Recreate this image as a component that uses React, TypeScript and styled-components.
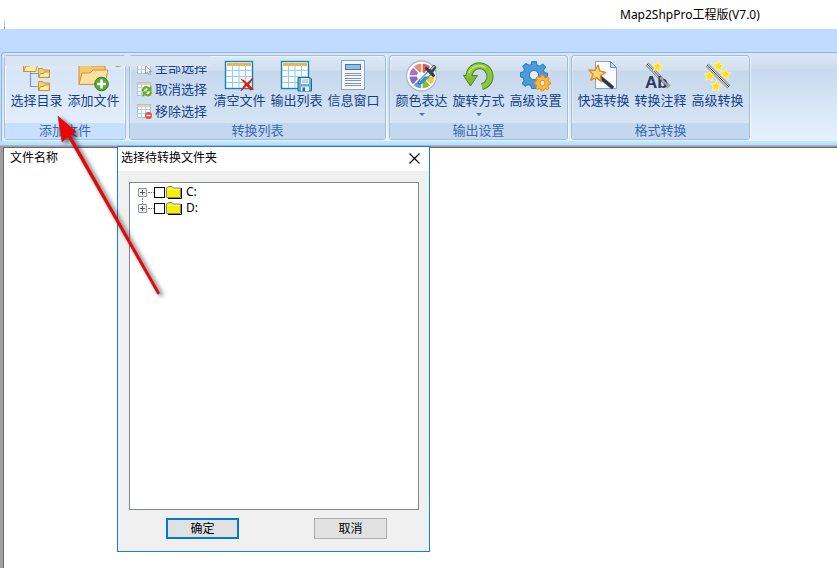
import React from "react";
import styled, { createGlobalStyle, css } from "styled-components";

const GlobalStyle = createGlobalStyle`
  * { box-sizing: border-box; }
  html, body, #root { height: 100%; }
  body {
    margin: 0;
    background: #fff;
    color: #000;
    font: 12px/16px "Noto Sans", "Noto Sans CJK SC", sans-serif;
    overflow: hidden;
  }
  button { font: inherit; color: inherit; }
`;

const Window = styled.div`
  position: relative;
  display: flex;
  flex-direction: column;
  min-height: 100%;
`;

const TitleBar = styled.header`
  display: flex;
  align-items: flex-end;
  height: 29px;
  padding-left: 4px;
  white-space: nowrap;
`;

const EdgeMark = styled.span`
  width: 1px;
  height: 11px;
  background: linear-gradient(#fff, #7f93ad);
`;

const Caption = styled.h1`
  margin: 0 0 0 615px;
  font-size: 12px;
  font-weight: 400;
  line-height: 28px;
`;

const TabStrip = styled.div`
  height: 23px;
  background: #bfdbff;
`;

const RibbonBack = styled.div`
  padding-left: 1px;
  padding-bottom: 2px;
  background: #bfdbff;
  border-bottom: 1px solid #9fb8da;
`;

const Ribbon = styled.nav`
  position: relative;
  display: flex;
  gap: 3px;
  height: 91px;
  padding: 2px 0 3px 2px;
  border: 1px solid #8db2e3;
  border-right: 0;
  border-bottom: 2px solid #bdeaf8;
  border-radius: 4px 0 0 4px;
  background: linear-gradient(#dbe6f4 0, #cfdded 15px, #c9d9ed 16px, #e7f2ff 100%);
`;

const Group = styled.section<{ $hot?: boolean }>`
  display: flex;
  flex-direction: column;
  flex: none;
  height: 85px;
  border: 1px solid #9ebfdb;
  border-radius: 3px;
  box-shadow: inset 1px 1px 0 #ffffff55, 1px 0 0 #ffffff99;
  background: linear-gradient(#dde8f5 0, #d1dfef 14px, #c7d8ed 15px, #d9e8f5 100%);
  ${(p) =>
    p.$hot &&
    css`
      border-color: #9fc3e8;
      background: linear-gradient(#e4effc 0, #dce8f8 14px, #d6e5f8 15px, #e6f0fd 100%);
      box-shadow: inset -1px -1px 0 #fff, inset 1px 0 0 #fff;
    `}
`;

const GroupTools = styled.div`
  display: flex;
  flex: 1;
  padding: 0 3px;
`;

const GroupName = styled.h2<{ $hot?: boolean }>`
  height: 16px;
  margin: 0;
  border-radius: 0 0 2px 2px;
  background: ${(p) => (p.$hot ? "#c8e0ff" : "#c1d8f0")};
  color: #3e6aaa;
  font-size: 13px;
  font-weight: 400;
  line-height: 15px;
  text-align: center;
`;

const BigButton = styled.button`
  display: flex;
  flex-direction: column;
  align-items: center;
  width: 57px;
  padding: 4px 0 0;
  border: 0;
  background: none;
  color: #15428b;
  font-size: 13px;
  line-height: 16px;
  white-space: nowrap;
  svg { flex: none; overflow: visible; }
`;

const DropMark = styled.span`
  margin-top: 5px;
  border: 3px solid transparent;
  border-top-color: #5077ac;
  border-bottom: 0;
`;

const SmallList = styled.div`
  display: flex;
  flex-direction: column;
  width: 78px;
  padding-left: 4px;
`;

const SmallButton = styled.button`
  display: flex;
  align-items: center;
  gap: 3px;
  height: 22px;
  padding: 0;
  border: 0;
  background: none;
  color: #15428b;
  font-size: 13px;
  line-height: 20px;
  white-space: nowrap;
`;

const Veil = styled.div`
  position: absolute;
  top: 3px;
  left: 3px;
  width: 206px;
  height: 10px;
  background: #dae5f2;
`;

const FilePane = styled.main`
  flex: 1;
  border-top: 1px solid #a0a0a0;
  border-left: 3px solid #a0a0a0;
  background: #fff;
  box-shadow: inset 1px 1px 0 #696969;
`;

const FileTable = styled.table`
  width: 100%;
  border-collapse: collapse;
  th {
    padding: 3px 7px;
    font-weight: 400;
    text-align: left;
  }
`;

const Dialog = styled.section`
  position: absolute;
  top: 146px;
  left: 117px;
  width: 313px;
  border: 1px solid #1a7fd4;
  background: #f0f0f0;
`;

const DialogTitle = styled.div`
  display: flex;
  align-items: flex-start;
  justify-content: space-between;
  height: 24px;
  padding-left: 3px;
  background: #fff;
  h2 { margin: 0; font-size: 12px; font-weight: 400; line-height: 22px; }
`;

const CloseButton = styled.button`
  display: flex;
  align-items: center;
  justify-content: center;
  width: 30px;
  height: 22px;
  padding: 0;
  border: 0;
  background: none;
`;

const Tree = styled.ul`
  height: 328px;
  margin: 11px 10px 0 11px;
  padding: 1px 8px;
  border: 1px solid #828790;
  background: #fff;
  list-style: none;
`;

const TreeRow = styled.li`
  display: flex;
  align-items: center;
  height: 16px;
`;

const Expander = styled.button`
  position: relative;
  display: flex;
  width: 9px;
  height: 9px;
  padding: 0;
  border: 1px solid #919191;
  border-radius: 1px;
  background: #f5f5f5;
  svg { display: block; }
`;

const Dots = styled.span`
  width: 6px;
  margin-left: 1px;
  border-top: 1px dotted #808080;
`;

const Joint = styled.span`
  position: absolute;
  top: 9px;
  left: 3px;
  height: 6px;
  border-left: 1px dotted #808080;
`;

const DriveLabel = styled.label`
  display: flex;
  align-items: center;
  svg { margin: 0 4px 0 1px; }
`;

const Check = styled.input`
  appearance: none;
  width: 11px;
  height: 11px;
  margin: 0;
  border: 1px solid #000;
  background: #fff;
`;

const DialogActions = styled.div`
  display: flex;
  justify-content: space-between;
  padding: 8px 42px 12px 48px;
`;

const DialogButton = styled.button<{ $primary?: boolean }>`
  width: 73px;
  height: 21px;
  padding: 0;
  border: ${(p) => (p.$primary ? "2px solid #0078d7" : "1px solid #adadad")};
  background: #e1e1e1;
  line-height: 16px;
`;

const Pointer = styled.svg`
  position: absolute;
  top: 110px;
  left: 50px;
  pointer-events: none;
`;

const Icon = ({ children, size = 32, box = 32 }: { children: React.ReactNode; size?: number; box?: number }) => (
  <svg width={size} height={size} viewBox={`0 0 ${box} ${box}`} aria-hidden="true">
    {children}
  </svg>
);

const MiniFolder = ({ x, y }: { x: number; y: number }) => (
  <g transform={`translate(${x} ${y})`} stroke="#c8922e" strokeLinejoin="round">
    <path d="M.5 9.500V.5h4l1 1.500h6v7.500z" fill="#f3cf7b" />
    <path d="M.7 9.500 2.500 5.500h3l1-1.500h5l-.5 5.500z" fill="#ffe9ad" />
  </g>
);

const FolderTreeIcon = () => (
  <Icon>
    <path d="M9.500 10v16.500h8M9.500 13.500h8" fill="none" stroke="#8b98a8" strokeWidth="1.200" />
    <g transform="translate(2 1)" stroke="#c8922e" strokeLinejoin="round">
      <path d="M.5 10.500V1.500h5l1 1.500h6v7.500z" fill="#f3cf7b" />
      <path d="M.5 10.500 3 5h4l1-1h6.500l-2 6.500z" fill="#ffe9ad" />
    </g>
    <MiniFolder x={17} y={8} />
    <MiniFolder x={17} y={21} />
  </Icon>
);

const AddFolderIcon = () => (
  <Icon>
    <ellipse cx="40" cy="4" rx="4" ry="3" fill="#7ab648" />
    <g stroke="#cf9436" strokeLinejoin="round">
      <path d="M1 24.500V3h10l2 3h14v18z" fill="#f2c96c" />
      <path d="M1 24.500 4 13h8l3-3h15l-3 14z" fill="#ffe0a0" />
    </g>
    <circle cx="23.500" cy="24" r="6.800" fill="#55a92e" stroke="#2f7d1c" />
    <path d="M23.500 19.500v9M19 24h9" stroke="#fff" strokeWidth="2.600" />
  </Icon>
);

const Sheet = ({ x = 1 }: { x?: number }) => (
  <g transform={`translate(${x} 1)`}>
    <rect x=".5" y=".5" width="27" height="27" fill="#f7fcff" stroke="#1683b7" strokeWidth="1.400" />
    <path d="M2 3.500h24" stroke="#f0b440" strokeWidth="3" />
    <path d="M7.500 2v25M14 2v25M20.500 2v25M1 9.500h26M1 15.500h26M1 21.500h26" stroke="#9ccbe6" />
  </g>
);

const ClearIcon = () => (
  <Icon>
    <Sheet />
    <path d="M16 18.500 20 20l3 3 5-5 1.500.5-4.500 6 5 5-3.500 1-4-4.500-5 5-1-.5 4.500-6.500z" fill="#df1c12" />
  </Icon>
);

const ExportIcon = () => (
  <Icon>
    <Sheet x={0} />
    <path d="M17 17.500h12l1.500 1.500v12H17z" fill="#6aaed6" stroke="#146f9f" />
    <path d="M20 18h8v6h-8z" fill="#eef6fb" />
    <path d="M21 20h6M21 22h6" stroke="#9aaebb" />
    <path d="M20 26.500h8V31h-8z" fill="#e4ecf1" />
    <path d="M21.500 27.500h2.500V31h-2.500z" fill="#27668c" />
  </Icon>
);

const InfoIcon = () => (
  <Icon>
    <rect x="3.500" y=".5" width="23" height="29" fill="#f5f8fd" stroke="#8ea3c8" />
    <rect x="7.500" y="4.500" width="15" height="5" fill="#8cc0e4" stroke="#4974a8" />
    <path d="M7 13.500h16M7 15.500h16M7 18.500h16M7 20.500h16M7 23.500h16M7 25.500h16" stroke="#8391bd" />
  </Icon>
);

const PaletteIcon = () => (
  <Icon>
    <circle cx="15.500" cy="16" r="15" fill="#fff" stroke="#aeb9c9" strokeWidth="1.400" />
    <g stroke="#fff" strokeWidth="1.200">
      <path d="M16 16V3a13 13 0 0 0-9 3.800z" fill="#ed8a72" />
      <path d="M16 16 7 6.800A13 13 0 0 0 3 16z" fill="#b26fc0" />
      <path d="M16 16H3a13 13 0 0 0 4 9.200z" fill="#7c6cc8" />
      <path d="M16 16l-9 9.200A13 13 0 0 0 16 29z" fill="#5a9ed8" />
      <path d="M16 16v13a13 13 0 0 0 9-3.800z" fill="#8ebd2c" />
      <path d="M16 16l9 9.200A13 13 0 0 0 29 16z" fill="#e8cb35" />
      <path d="M16 16h13a13 13 0 0 0-4-9.200z" fill="#f2a446" />
      <path d="M16 16l9-9.200A13 13 0 0 0 16 3z" fill="#e25a5a" />
    </g>
    <circle cx="15" cy="16" r="4" fill="#fff" />
    <path d="M12.500 24l1-4 9-9 3 3-9 9z" fill="#d4edfa" stroke="#315f91" />
    <path d="M13.500 23.500l1-3 4-4h5l-7 6.500z" fill="#3792d4" />
    <path d="M20.500 8.500l7 7" stroke="#263850" strokeWidth="3" strokeLinecap="round" />
    <path d="M25 11.500l3-4" stroke="#34455c" strokeWidth="4.500" strokeLinecap="round" />
    <path d="M25.500 9l2.500-2.500" stroke="#b9c5d3" strokeWidth="1.500" strokeLinecap="round" />
  </Icon>
);

const RotateIcon = () => (
  <Icon>
    <path d="M6 16.500A10.500 10.500 0 1 1 19 26.500" fill="none" stroke="#4d8a18" strokeWidth="7" />
    <path d="M.5 15.500h14L7.500 26z" fill="#7fba32" stroke="#4d8a18" />
    <path d="M6 17A10.500 10.500 0 1 1 19 26.500" fill="none" stroke="#8dc63f" strokeWidth="5" />
    <path d="M6 13A11 11 0 0 1 23 8" fill="none" stroke="#c3e384" strokeWidth="1.500" />
  </Icon>
);

const Gear = ({ cx, cy, s, fill, stroke }: { cx: number; cy: number; s: number; fill: string; stroke: string }) => (
  <g transform={`translate(${cx} ${cy}) scale(${s})`} fill={fill} stroke={stroke}>
    <path
      d="M-2.500-15h5l1 4 3 1.300L9.700-12.200l3.300 3.500-2.600 3.200 1.300 3L15-2V2.500l-3.600 1-1.300 3 2.400 3.500-3.500 3L6 11l-3 1.200L2 15h-4.500l-1-3.300-3-1.200-3.200 2-3.300-3 2-3.500-1.200-3L-15 2v-4.500l3.300-1 1.200-2.800-2-3.200 3.300-3.300L-5.500-10.800-3.300-11.500z"
      strokeWidth={1 / s}
      strokeLinejoin="round"
    />
    <circle r="5" fill="#e6f0fa" strokeWidth={1 / s} />
  </g>
);

const GearsIcon = () => (
  <Icon>
    <Gear cx={14} cy={15} s={0.9} fill="#4b9bd8" stroke="#2f7cba" />
    <Gear cx={22.5} cy={23} s={0.52} fill="#fbb83c" stroke="#e08a1e" />
  </Icon>
);

const Star = ({ x, y, s = 1, soft }: { x: number; y: number; s?: number; soft?: boolean }) => (
  <path
    transform={`translate(${x} ${y}) rotate(8) scale(${s})`}
    d="M0-6 1.700-2 6-1.700 2.700 1.100 3.800 5.300 0 3-3.800 5.300-2.700 1.100-6-1.700-1.700-2z"
    fill={soft ? "#ffd778" : "#ffe000"}
    stroke={soft ? "#e18a22" : "#fff2a0"}
    strokeWidth="1"
    strokeLinejoin="round"
  />
);

const Wand = ({ d, dark }: { d: string; dark?: boolean }) => (
  <>
    <path d={d} stroke={dark ? "#5f6470" : "#8d8784"} strokeWidth="4" />
    <path d={d} stroke={dark ? "#2d3340" : "#e4e4e6"} strokeWidth="2.400" />
    {!dark && <path d={d} stroke="#4c4c50" strokeWidth="1" />}
  </>
);

const QuickIcon = () => (
  <Icon>
    <path d="M7.500 1.500h15l6 6v21h-21z" fill="#f8fbff" stroke="#8e9ec0" />
    <path d="M22.500 1.500v6h6z" fill="#c7d7ef" stroke="#7389b8" />
    <Wand d="M12 17l13 11" dark />
    <Star x={9} y={13.5} s={1.4} soft />
  </Icon>
);

const LetterMark = styled.text`
  font: 700 17px "Liberation Sans", sans-serif;
  fill: #2c3a5c;
`;

const NoteIcon = () => (
  <Icon>
    <Wand d="M2 4l22 23" />
    <LetterMark x="0" y="28">Ab</LetterMark>
    <path d="M15 17.500l9 9.500" stroke="#a59f9c" strokeWidth="2" />
    <Star x={12.5} y={6.5} s={0.9} />
  </Icon>
);

const AdvancedIcon = () => (
  <Icon>
    <Star x={16.5} y={6} s={0.9} />
    <Star x={7.5} y={16} s={0.9} />
    <Star x={23.5} y={14} s={0.9} />
    <Star x={14} y={26} s={0.9} />
    <Wand d="M5 5l22 22" />
  </Icon>
);

const MiniSheet = ({ children }: { children: React.ReactNode }) => (
  <Icon size={15} box={15}>
    <rect x=".5" y=".5" width="13" height="13" fill="#f4faff" stroke="#a9c5df" />
    <path d="M1 2h12" stroke="#f0d48c" strokeWidth="2" />
    <path d="M4.500 2v11M8.500 2v11M1 5.500h12M1 9.500h12" stroke="#b7d3ea" />
    {children}
  </Icon>
);

const SelectAllIcon = () => (
  <MiniSheet>
    <path d="M8.500 5.500v8l2-1.500 1.500 3 1.500-.7-1.500-2.800h2.500z" fill="#f5f5f5" stroke="#8b8f98" strokeWidth=".8" />
  </MiniSheet>
);

const InvertIcon = () => (
  <MiniSheet>
    <path d="M6 9c0-4 4-5 6-2M14 9.500c0 4-4 5-6 2" fill="none" stroke="#6cab1d" strokeWidth="2.200" />
    <path d="M14.500 3.500V9H9zM5.500 15V9.500H11z" fill="#6cab1d" />
  </MiniSheet>
);

const RemoveIcon = () => (
  <MiniSheet>
    <circle cx="11.500" cy="11.500" r="3.500" fill="#e64b36" />
    <path d="M9.500 11.500h4" stroke="#fff" strokeWidth="1.500" />
  </MiniSheet>
);

type Tool = { label: string; icon: React.ReactNode; menu?: boolean };

const addTools: Tool[] = [
  { label: "选择目录", icon: <FolderTreeIcon /> },
  { label: "添加文件", icon: <AddFolderIcon /> },
];
const selectTools: Tool[] = [
  { label: "全部选择", icon: <SelectAllIcon /> },
  { label: "取消选择", icon: <InvertIcon /> },
  { label: "移除选择", icon: <RemoveIcon /> },
];
const listTools: Tool[] = [
  { label: "清空文件", icon: <ClearIcon /> },
  { label: "输出列表", icon: <ExportIcon /> },
  { label: "信息窗口", icon: <InfoIcon /> },
];
const outputTools: Tool[] = [
  { label: "颜色表达", icon: <PaletteIcon />, menu: true },
  { label: "旋转方式", icon: <RotateIcon />, menu: true },
  { label: "高级设置", icon: <GearsIcon /> },
];
const convertTools: Tool[] = [
  { label: "快速转换", icon: <QuickIcon /> },
  { label: "转换注释", icon: <NoteIcon /> },
  { label: "高级转换", icon: <AdvancedIcon /> },
];

const RibbonGroup = ({ name, tools, hot, children }: { name: string; tools: Tool[]; hot?: boolean; children?: React.ReactNode }) => (
  <Group $hot={hot} aria-label={name}>
    <GroupTools>
      {children}
      {tools.map((t) => (
        <BigButton key={t.label} type="button">
          {t.icon}
          {t.label}
          {t.menu && <DropMark />}
        </BigButton>
      ))}
    </GroupTools>
    <GroupName $hot={hot}>{name}</GroupName>
  </Group>
);

const FolderGlyph = () => (
  <svg width="16" height="14" viewBox="0 0 16 14" aria-hidden="true">
    <path d="M2 13.500h13.500V3" fill="none" stroke="#000" />
    <path d="M.5 12.500V3L2 1.500h4L7.500 3h7v9.500z" fill="#f4f000" stroke="#8c8c70" />
    <path d="M1.500 4.500h12" stroke="#fffcae" />
  </svg>
);

const drives = ["C:", "D:"];

export default function App() {
  return (
    <>
      <GlobalStyle />
      <Window>
        <TitleBar>
          <EdgeMark />
          <Caption>Map2ShpPro工程版(V7.0)</Caption>
        </TitleBar>
        <TabStrip />
        <RibbonBack>
          <Ribbon>
            <RibbonGroup name="添加文件" tools={addTools} hot />
            <RibbonGroup name="转换列表" tools={listTools}>
              <SmallList>
                {selectTools.map((t) => (
                  <SmallButton key={t.label} type="button">
                    {t.icon}
                    {t.label}
                  </SmallButton>
                ))}
              </SmallList>
            </RibbonGroup>
            <RibbonGroup name="输出设置" tools={outputTools} />
            <RibbonGroup name="格式转换" tools={convertTools} />
            <Veil />
          </Ribbon>
        </RibbonBack>
        <FilePane>
          <FileTable>
            <thead>
              <tr>
                <th scope="col">文件名称</th>
              </tr>
            </thead>
          </FileTable>
        </FilePane>

        <Dialog role="dialog" aria-labelledby="folder-title">
          <DialogTitle>
            <h2 id="folder-title">选择待转换文件夹</h2>
            <CloseButton type="button" aria-label="关闭">
              <svg width="11" height="11" viewBox="0 0 11 11" aria-hidden="true">
                <path d="M.5.5l10 10M10.500.5l-10 10" stroke="#000" strokeWidth="1.200" />
              </svg>
            </CloseButton>
          </DialogTitle>
          <Tree>
            {drives.map((d, i) => (
              <TreeRow key={d}>
                <Expander type="button" aria-label={`展开 ${d}`}>
                  <svg width="7" height="7" viewBox="0 0 7 7" aria-hidden="true">
                    <path d="M1 3.500h5M3.500 1v5" stroke="#3a56a0" />
                  </svg>
                  {i < drives.length - 1 && <Joint />}
                </Expander>
                <Dots />
                <DriveLabel>
                  <Check type="checkbox" />
                  <FolderGlyph />
                  {d}
                </DriveLabel>
              </TreeRow>
            ))}
          </Tree>
          <DialogActions>
            <DialogButton type="button" $primary>确定</DialogButton>
            <DialogButton type="button">取消</DialogButton>
          </DialogActions>
        </Dialog>

        <Pointer width="125" height="200" viewBox="0 0 125 200" aria-hidden="true">
          <defs>
            <filter id="pointer-shadow" x="-20%" y="-20%" width="140%" height="140%">
              <feDropShadow dx="3" dy="2" stdDeviation="2" floodColor="#000" floodOpacity=".6" />
            </filter>
          </defs>
          <path
            d="M8 6 26 22 20.500 25 109.500 182.500Q109 185 107.500 184L18 27 12 32z"
            fill="#f90000"
            stroke="#8a2020"
            strokeWidth=".5"
            filter="url(#pointer-shadow)"
          />
        </Pointer>
      </Window>
    </>
  );
}
